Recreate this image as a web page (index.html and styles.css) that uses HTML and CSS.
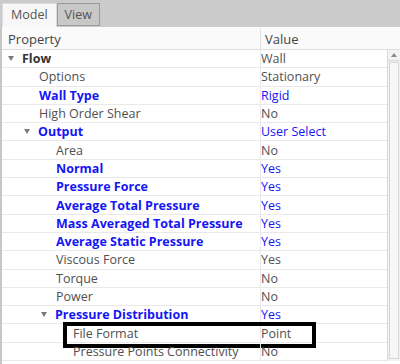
FILE: index.html
```html
<!DOCTYPE html>
<html lang="en">
<head>
    <meta charset="UTF-8">
    <meta name="viewport" content="width=device-width, initial-scale=1.0">
    <title>Properties</title>
    <link rel="stylesheet" href="styles.css">
</head>
<body>
    <div class="tabbar">
        <div class="tab active">Model</div>
        <div class="tab">View</div>
    </div>

    <div class="panel">
        <div class="header">
            <div class="cell">Property</div>
            <div class="cell value">Value</div>
        </div>

        <div class="grid">
            <div class="rows">
                <div class="row"><div class="cell lvl0 bold"><span class="arrow"></span>Flow</div><div class="cell value">Wall</div></div>
                <div class="row"><div class="cell lvl1">Options</div><div class="cell value">Stationary</div></div>
                <div class="row"><div class="cell lvl1 bold blue">Wall Type</div><div class="cell value blue">Rigid</div></div>
                <div class="row"><div class="cell lvl1">High Order Shear</div><div class="cell value">No</div></div>
                <div class="row"><div class="cell lvl1 bold blue"><span class="arrow"></span>Output</div><div class="cell value blue">User Select</div></div>
                <div class="row"><div class="cell lvl2">Area</div><div class="cell value">No</div></div>
                <div class="row"><div class="cell lvl2 bold blue">Normal</div><div class="cell value blue">Yes</div></div>
                <div class="row"><div class="cell lvl2 bold blue">Pressure Force</div><div class="cell value blue">Yes</div></div>
                <div class="row"><div class="cell lvl2 bold blue">Average Total Pressure</div><div class="cell value blue">Yes</div></div>
                <div class="row"><div class="cell lvl2 bold blue">Mass Averaged Total Pressure</div><div class="cell value blue">Yes</div></div>
                <div class="row"><div class="cell lvl2 bold blue">Average Static Pressure</div><div class="cell value blue">Yes</div></div>
                <div class="row"><div class="cell lvl2">Viscous Force</div><div class="cell value">Yes</div></div>
                <div class="row"><div class="cell lvl2">Torque</div><div class="cell value">No</div></div>
                <div class="row"><div class="cell lvl2">Power</div><div class="cell value">No</div></div>
                <div class="row"><div class="cell lvl2 bold blue"><span class="arrow"></span>Pressure Distribution</div><div class="cell value blue">Yes</div></div>
                <div class="row highlighted"><div class="cell lvl3">File Format</div><div class="cell value">Point</div><div class="mark"></div></div>
                <div class="row"><div class="cell lvl3">Pressure Points Connectivity</div><div class="cell value">No</div></div>
            </div>

            <div class="scrollbar">
                <div class="scroll-up"><span class="up"></span></div>
                <div class="thumb"></div>
            </div>
        </div>
    </div>
</body>
</html>
```

FILE: styles.css
```css
:root {
    --text: #505050;
    --blue: #1515f5;
    --line: #e9e9e9;
    --row-h: 18.3px;
}

* {
    margin: 0;
    padding: 0;
    box-sizing: border-box;
}

body {
    width: 400px;
    height: 364px;
    overflow: hidden;
    font-family: 'Open Sans', sans-serif;
    font-size: 12.5px;
    color: var(--text);
    background: #cbcbcb;
}

.tabbar {
    height: 27px;
    display: flex;
    align-items: flex-end;
    padding-left: 2px;
}

.tab {
    height: 23px;
    line-height: 22px;
    padding: 0 7px;
    font-size: 12.5px;
    color: #555;
    background: #c8c8c8;
    border: 1px solid #9a9a9a;
    margin-bottom: 1px;
}

.tab.active {
    background: #f7f7f7;
    border-color: #dcdcdc;
    border-bottom: none;
    height: 24px;
    margin-bottom: 0;
    padding: 0 8px;
}

.panel {
    background: #fff;
    border-left: 2px solid #c6c6c6;
    height: 337px;
}

.header {
    display: grid;
    grid-template-columns: 258px 1fr;
    height: 23px;
    line-height: 22px;
    background: #fafafa;
    border-bottom: 1px solid #dedede;
    font-size: 13px;
    color: #444;
    padding-top: 1px;
}

.header .cell {
    padding-left: 6px;
}

.header .value {
    border-left: 1px solid #e2e2e2;
    padding-left: 4px;
}

.grid {
    display: flex;
}

.rows {
    width: 385px;
}

.row {
    position: relative;
    display: grid;
    grid-template-columns: 258px 1fr;
    height: var(--row-h);
    line-height: 17px;
    border-bottom: 1px solid var(--line);
}

.cell {
    white-space: nowrap;
    overflow: hidden;
    display: flex;
    align-items: center;
}

.value {
    border-left: 1px solid var(--line);
    padding-left: 0;
}

.bold {
    font-weight: 700;
    color: #333;
}

.blue {
    color: var(--blue);
}

.lvl0 { padding-left: 21px; }
.lvl1 { padding-left: 37px; }
.lvl2 { padding-left: 54px; }
.lvl3 { padding-left: 71px; }

.arrow {
    width: 0;
    height: 0;
    border-left: 3.5px solid transparent;
    border-right: 3.5px solid transparent;
    border-top: 5px solid #7a7a7a;
    margin-left: -15px;
    margin-right: 8px;
}

/* black frame drawn over the File Format row */
.mark {
    position: absolute;
    left: 61px;
    top: -2px;
    width: 253px;
    height: 26px;
    border: 4px solid #000;
}

.scrollbar {
    width: 13px;
    display: flex;
    flex-direction: column;
    border-left: 1px solid #dadada;
    background: #f2f2f2;
}

.scroll-up {
    height: 11px;
    display: flex;
    justify-content: center;
    align-items: center;
    border-bottom: 1px solid #dadada;
}

.up {
    width: 0;
    height: 0;
    border-left: 3px solid transparent;
    border-right: 3px solid transparent;
    border-bottom: 4px solid #8a8a8a;
}

.thumb {
    height: 297px;
    margin: 1px 1px 0 1px;
    background: #f7f7f7;
    border: 1px solid #d6d6d6;
}
```
